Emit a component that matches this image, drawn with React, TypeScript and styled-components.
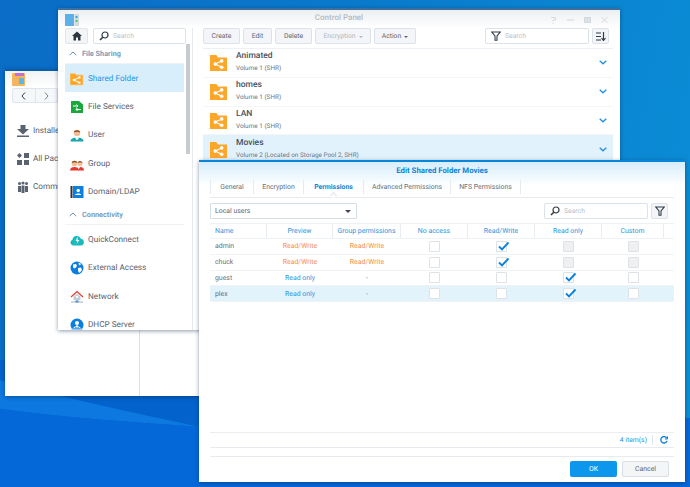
import React from "react";
import styled, { createGlobalStyle } from "styled-components";

const Global = createGlobalStyle`
  html, body { margin: 0; padding: 0; width: 690px; height: 487px; overflow: hidden; }
  body { font-family: Roboto, "Liberation Sans", sans-serif; font-size: 8px; color: #515c6b; text-rendering: geometricPrecision; }
  * { box-sizing: border-box; }
`;

const Desktop = styled.div`
  position: relative; width: 690px; height: 487px; overflow: hidden;
  background: linear-gradient(100deg, #0a6cc6 0%, #0a79cb 45%, #0b8ed6 100%);
`;
const Wave = styled.svg`position: absolute; left: 0; top: 0;`;

const Win = styled.div<{ $x: number; $y: number; $w: number; $h: number; $top?: string }>`
  position: absolute; left: ${p => p.$x}px; top: ${p => p.$y}px; width: ${p => p.$w}px; height: ${p => p.$h}px;
  background: #fff; display: flex; flex-direction: column; overflow: hidden;
  border-top: 2px solid ${p => p.$top ?? "#0a5da8"};
  box-shadow: 0 1px 4px rgba(0,30,70,.45);
`;

/* Package Center */
const PkgHead = styled.div`
  height: 17px; padding: 2px 7px; background: linear-gradient(#f0f2f4, #fff);
`;
const NavGroup = styled.div`
  display: flex; width: 46px; height: 15px; margin: 0 0 0 7px;
  border: 1px solid #dfe5ec; border-radius: 2px; background: #f5f7f9;
`;
const NavBtn = styled.div`
  flex: 1; display: flex; align-items: center; justify-content: center;
  & + & { border-left: 1px solid #dfe5ec; }
`;
const PkgList = styled.div`display: flex; flex-direction: column; margin-top: 14px; padding-left: 12px;`;
const PkgItem = styled.div`display: flex; align-items: center; gap: 4px; height: 28px; font-size: 8.2px; white-space: nowrap; color: #545f6d;`;
const PkgBody = styled.div`flex: 1; position: relative;`;
const PkgLine = styled.div`position: absolute; left: 134px; top: 0; bottom: 0; width: 1px; background: #dcdfe3;`;

/* Control Panel */
const CpHead = styled.div`
  height: 18px; flex: none; display: flex; align-items: center; position: relative; padding: 2px 7px 0;
  background: linear-gradient(#eceff1, #fff);
`;
const CpTitle = styled.div`
  position: absolute; left: 0; right: 0; top: 3px; text-align: center; color: #b3bac3; font-size: 8px; font-weight: 500;
`;
const WinCtl = styled.div`margin-left: auto; display: flex; gap: 10px; padding-right: 5px;`;
const CpBody = styled.div`flex: 1; display: flex; min-height: 0;`;
const Side = styled.div`
  width: 135px; flex: none; padding-left: 7px; border-right: 1px solid #e6eaee; margin-right: 10px; position: relative;
`;
const SideTop = styled.div`display: flex; gap: 5px; height: 16px;`;
const HomeBtn = styled.div`
  width: 23px; height: 16px; border: 1px solid #dfe5ec; border-radius: 2px; background: #f3f5f7;
  display: flex; align-items: center; justify-content: center;
`;
const SearchBox = styled.div<{ $w: number }>`
  width: ${p => p.$w}px; height: 16px; border: 1px solid #dbe2ea; border-radius: 2px; background: #fff; flex: none;
  display: flex; align-items: center; gap: 4px; padding-left: 5px; color: #b9c1ca; font-size: 6.8px;
`;
const Section = styled.div`
  height: 20px; width: 119px; display: flex; align-items: center; gap: 5px; padding-left: 4px;
  color: #7d9cb8; font-weight: 700; font-size: 7.3px; border-bottom: 1px solid #f0f3f6;
`;
const SideList = styled.div`display: flex; flex-direction: column; width: 119px;`;
const SideItem = styled.div<{ $on?: boolean }>`
  height: 28.3px; display: flex; align-items: center; gap: 4px; padding: 1px 0 0 5px; font-size: 8.2px;
  background: ${p => (p.$on ? "#d9eefb" : "transparent")}; color: ${p => (p.$on ? "#1f97e6" : "#59626f")};
`;
const Scroll = styled.div`
  position: absolute; left: 128px; top: 16px; width: 4px; height: 110px; background: #c6cbcf;
`;
const Main = styled.div`flex: 1; display: flex; flex-direction: column; min-width: 0; padding-right: 7px;`;
const Toolbar = styled.div`display: flex; height: 16px; gap: 3px; flex: none; margin-right: 4px;`;
const Btn = styled.div<{ $w: number; $off?: boolean }>`
  width: ${p => p.$w}px; height: 16px; flex: none; border: 1px solid #dbe2ea; border-radius: 2px; background: #f3f5f8;
  display: flex; align-items: center; justify-content: center; gap: 3px; font-size: 6.8px;
  color: ${p => (p.$off ? "#b0b7c0" : "#5c6673")};
`;
const Caret = styled.span`
  width: 0; height: 0; border-left: 2px solid transparent; border-right: 2px solid transparent; border-top: 2px solid currentColor; margin-top: 1px;
`;
const Grow = styled.div`flex: 1;`;
const FolderList = styled.div`margin-top: 4px; border-top: 1px solid #edf0f4; display: flex; flex-direction: column;`;
const FolderRow = styled.div<{ $on?: boolean }>`
  height: 28.8px; flex: none; display: flex; align-items: center; padding: 0 6px 0 7px; gap: 9px;
  border-bottom: 1px solid #f3f5f7; background: ${p => (p.$on ? "#e2f2fc" : "#fff")};
`;
const FolderText = styled.div`flex: 1; display: flex; flex-direction: column; gap: 3px; margin-top: -2px;`;
const FolderName = styled.div`font-size: 8.5px; font-weight: 500; color: #47505c;`;
const FolderSub = styled.div`font-size: 6.4px; color: #6c7581;`;

/* Dialog */
const DlgHead = styled.div`
  height: 24px; flex: none; background: linear-gradient(#d6edfb, #fff); text-align: center;
  font-size: 7.8px; font-weight: 700; color: #0a86d8; padding-top: 4px;
`;
const DlgBody = styled.div`flex: 1; display: flex; flex-direction: column; padding: 0 14px 0 11px; min-height: 0;`;
const Tabs = styled.div`display: flex; height: 18px; flex: none; margin-top: -6px; border-bottom: 1px solid #e7ebef; margin-right: -3px; position: relative;`;
const Tab = styled.div<{ $w: number; $on?: boolean }>`
  width: ${p => p.$w}px; height: 14px; flex: none; display: flex; align-items: center; justify-content: center; font-size: 6.9px;
  border-left: 1px solid #e7ebef; position: relative;
  color: ${p => (p.$on ? "#0a86d8" : "#666f7b")}; font-weight: ${p => (p.$on ? 700 : 400)};
  &:last-child { border-right: 1px solid #e7ebef; }
`;
const TabTip = styled.span`
  position: absolute; left: 50%; bottom: -4px; width: 5px; height: 5px; margin-left: -3px; background: #fff;
  border-left: 1px solid #e0e5ea; border-top: 1px solid #e0e5ea; transform: rotate(45deg);
`;
const Filters = styled.div`display: flex; align-items: center; margin-top: 5px; height: 16px; flex: none; gap: 3px; margin-right: 3px;`;
const Select = styled.div`
  width: 147px; height: 16px; border: 1px solid #d5dde5; display: flex; align-items: center; justify-content: space-between; padding: 0 5px 0 4px;
  font-size: 6.9px; color: #5f6874; border-radius: 1px;
`;
const SelectArrow = styled.span`
  width: 0; height: 0; border-left: 3px solid transparent; border-right: 3px solid transparent; border-top: 3px solid #3c4650;
`;
const IconBtn = styled.div`
  width: 17px; height: 16px; border: 1px solid #dbe2ea; border-radius: 2px; background: #f3f5f8; display: flex; align-items: center; justify-content: center; flex: none;
`;
const Table = styled.div`margin-top: 4px; display: flex; flex-direction: column; margin-right: -3px;`;
const Row = styled.div<{ $on?: boolean; $head?: boolean }>`
  display: grid; grid-template-columns: 57px 66px 68px 67px 67px 67px 62px 9px; align-items: center;
  height: ${p => (p.$head ? 16 : 15.8)}px; flex: none;
  background: ${p => (p.$on ? "#e3f3fc" : "#fff")};
  border-bottom: 1px solid #f0f3f5;
  border-top: ${p => (p.$head ? "1px solid #eef1f4" : "0")};
`;
const Cell = styled.div<{ $left?: boolean; $c?: string; $sep?: boolean }>`
  font-size: 6.9px; white-space: nowrap;
  padding-left: ${p => (p.$left ? "5px" : "0")}; color: ${p => p.$c ?? "#67707c"};
  display: flex; align-items: center; height: 100%; justify-content: ${p => (p.$left ? "flex-start" : "center")};
  border-right: ${p => (p.$sep ? "1px solid #e9edf1" : "0")};
`;
const Check = styled.div<{ $off?: boolean }>`
  width: 11px; height: 11px; border: 1px solid #dde2e7; border-radius: 1px; position: relative;
  background: ${p => (p.$off ? "#eef0f2" : "#fff")};
  & svg { position: absolute; left: 0; top: -2px; }
`;
const Spacer = styled.div`flex: 1;`;
const Status = styled.div`
  border-top: 1px solid #eceff2; border-bottom: 1px solid #e7eaee; height: 16px; flex: none; display: flex; align-items: center; justify-content: flex-end;
  font-size: 6.8px; color: #2b96dc; margin-right: -3px; padding-right: 6px; gap: 5px;
  & svg { margin-left: 2px; }
`;
const StatusSep = styled.div`width: 1px; height: 10px; background: #e2e6ea;`;
const Footer = styled.div`
  margin-top: 8px; margin-right: -3px; height: 26px; flex: none; border-top: 1px solid #e7eaee; display: flex; justify-content: flex-end; align-items: flex-start; gap: 5px; padding: 4px 5px 0 0;
`;
const Ok = styled.div`
  width: 47px; height: 16px; background: #0d97ec; color: #fff; border-radius: 2px; font-size: 6.9px; display: flex; align-items: center; justify-content: center;
`;
const Cancel = styled(Ok)`
  background: #f3f5f7; color: #5c6673; border: 1px solid #d9dfe5;
`;

/* ---- drawings ---- */
const Folder = () => (
  <svg width="17" height="17" viewBox="0 0 16 16" style={{ flex: "none" }}>
    <path d="M0 1h6l1.500 2.200H16V16H0z" fill="#fca62a" />
    <path d="M5 9.500l6-3M5 9.500l6 3" fill="none" stroke="#fff" strokeWidth="1" />
    <circle cx="5" cy="9.500" r="1.700" fill="#fff" /><circle cx="11" cy="6.500" r="1.700" fill="#fff" /><circle cx="11" cy="12.500" r="1.700" fill="#fff" />
  </svg>
);
const Glass = ({ c = "#333d48" }: { c?: string }) => (
  <svg width="10" height="10" viewBox="0 0 10 10" fill="none" stroke={c} strokeWidth="1.200"><circle cx="6" cy="4" r="3" /><path d="M3.800 6.200L1 9" strokeWidth="1.600" /></svg>
);
const Funnel = () => (
  <svg width="10" height="10" viewBox="0 0 10 10" fill="none" stroke="#333d48" strokeWidth="1.100"><path d="M.8 1h8.400L6 5v4.200H4V5z" /></svg>
);
const Chev = () => (
  <svg width="8" height="5" viewBox="0 0 8 5" fill="none" stroke="#1e90e0" strokeWidth="1.300" style={{ flex: "none" }}><path d="M.7.8L4 3.800 7.300.8" /></svg>
);
const Up = () => (
  <svg width="8" height="5" viewBox="0 0 8 5" fill="none" stroke="#6f8ea8" strokeWidth="1"><path d="M.7 4L4 1l3.300 3" /></svg>
);
const Tick = () => (
  <svg width="13" height="12" viewBox="0 0 13 12" fill="none" stroke="#0a84e0" strokeWidth="1.900"><path d="M2 6.500L5 9.500 11.500 2.500" /></svg>
);
const Ic: React.FC<{ children: React.ReactNode }> = ({ children }) => (
  <svg width="14" height="14" viewBox="0 0 14 14" style={{ flex: "none" }}>{children}</svg>
);
const SideIcons: Record<string, React.ReactNode> = {
  shared: <Ic><path d="M0 1.500h5l1.500 1.500H13V13H0z" fill="#fca62a" stroke="#fbd08a" strokeWidth=".7" /><path d="M4 8l5-2.500M4 8l5 2.500" stroke="#fff" fill="none" /><circle cx="4" cy="8" r="1.200" fill="#fff" /><circle cx="9.400" cy="5.400" r="1.200" fill="#fff" /><circle cx="9.400" cy="10.600" r="1.200" fill="#fff" /></Ic>,
  files: <Ic><path d="M1 1h8l4 3.500V13H1z" fill="#19a83c" /><path d="M3 6h5M6.500 4.500L8 6 6.500 7.500M11 9.500H6M7.500 8L6 9.500 7.500 11" stroke="#fff" fill="none" /></Ic>,
  user: <Ic><path d="M0.500 13.500c0-3 3-4 6.500-4s6.500 1 6.500 4z" fill="#19a6ad" /><path d="M5.500 9h3v2L7 12 5.500 11z" fill="#fff" /><circle cx="7" cy="5" r="3.200" fill="#f6bd93" /><path d="M3.800 4.500C4 1.500 10 1.500 10.200 4.500 8 3.500 6 3.500 3.800 4.500z" fill="#8a4a20" /></Ic>,
  group: <Ic><path d="M0 13.500c0-2.500 2-3.500 4.500-3.500S9 11 9 13.500z" fill="#e4392f" /><circle cx="4.500" cy="6.500" r="2.800" fill="#f6bd93" /><path d="M1.700 6C2 3 7 3 7.300 6 5.500 5 3.500 5 1.700 6z" fill="#8a4a20" /><path d="M8 13.500H14c0-2.500-1.500-3.500-4-3.500z" fill="#e4392f" /><circle cx="10" cy="6.500" r="2.500" fill="#f6bd93" /><path d="M7.500 6C8 3.500 12 3.500 12.500 6 11 5 9 5 7.500 6z" fill="#6b3a1a" /></Ic>,
  domain: <Ic><rect x="0.500" y="1" width="2" height="12" fill="#28323e" /><rect x="3" y="1" width="10.500" height="12" fill="#0d7fdc" /><circle cx="8.200" cy="5.500" r="1.700" fill="#fff" /><path d="M5.200 10c0-2 6-2 6 0z" fill="#fff" /></Ic>,
  quick: <Ic><path d="M3 12.500a3 3 0 0 1-.6-5.800 4.500 4.500 0 0 1 8.600-.9 3.400 3.400 0 0 1 0 6.700z" fill="#1ab9bd" /><path d="M7.800 3.500L5.500 8h2L6.500 11l3-4H7.500z" fill="#fff" /></Ic>,
  ext: <Ic><circle cx="7" cy="7" r="6.500" fill="#0b7fe0" /><path d="M3 3.500L6 3l1 2-2 2.500-2-1zM8 7l3-.5 1 2.500-2.500 3L8 10zM8.500 1.500l3 1.500L9 4.500z" fill="#fff" /></Ic>,
  net: <Ic><path d="M1 7l6-5.500L13 7" fill="none" stroke="#e8372c" strokeWidth="1.100" /><path d="M3.500 6.500L7 3.500l3.500 3V10h-7z" fill="#c4ccd4" /><circle cx="7" cy="6.800" r="1.200" fill="#fff" /><rect x="5.500" y="10.500" width="3" height="2" fill="#0b7fe0" /><path d="M1 12h12" stroke="#9fb0c0" /></Ic>,
  dhcp: <Ic><circle cx="7" cy="7" r="6.500" fill="#0b7fe0" /><circle cx="7" cy="5" r="2" fill="#fff" /><path d="M7 7v3M7 8L3.500 10M7 8l3.500 2" stroke="#fff" /><path d="M1 10.500h12v.5c-3 3-9 3-12 0z" fill="#9cc9f0" /></Ic>,
};
const Winicons = () => (
  <WinCtl>
    <svg width="7" height="8" viewBox="0 0 7 8" fill="none" stroke="#d3d8dd" strokeWidth="1"><path d="M1 1.500h4.500v2.500h-2.500v1.500M3 7v1" /></svg>
    <svg width="7" height="8" viewBox="0 0 7 8" stroke="#d3d8dd"><path d="M0 4h7" /></svg>
    <svg width="7" height="8" viewBox="0 0 7 8" fill="#dde1e5" stroke="#d3d8dd"><rect x=".5" y="1.500" width="6" height="5" /></svg>
    <svg width="7" height="8" viewBox="0 0 7 8" stroke="#d3d8dd"><path d="M.5 1l6 6M6.500 1l-6 6" /></svg>
  </WinCtl>
);

const sideA = [
  ["shared", "Shared Folder"], ["files", "File Services"], ["user", "User"], ["group", "Group"], ["domain", "Domain/LDAP"],
];
const sideB = [["quick", "QuickConnect"], ["ext", "External Access"], ["net", "Network"], ["dhcp", "DHCP Server"]];
const folders = [
  ["Animated", "Volume 1 (SHR)"], ["homes", "Volume 1 (SHR)"], ["LAN", "Volume 1 (SHR)"],
  ["Movies", "Volume 2 (Located on Storage Pool 2, SHR)"],
];
const O = "#f58f45", B = "#2b96dc";
const rows = [
  { n: "admin", p: "Read/Write", g: "Read/Write", pc: O, gc: O, c: ["", "t", "d", "d"] },
  { n: "chuck", p: "Read/Write", g: "Read/Write", pc: O, gc: O, c: ["", "t", "d", "d"] },
  { n: "guest", p: "Read only", g: "-", pc: B, gc: undefined, c: ["", "", "t", ""] },
  { n: "plex", p: "Read only", g: "-", pc: B, gc: undefined, c: ["", "", "t", ""], on: true },
];
const heads = ["Preview", "Group permissions", "No access", "Read/Write", "Read only", "Custom"];

export default function App() {
  return (
    <Desktop>
      <Global />
      <Wave width="690" height="487" viewBox="0 0 690 487">
        <path d="M0 360C200 390 450 420 690 418V487H0z" fill="#0462cc" />
        <path d="M0 380C60 397 130 412 200 427C130 422 60 417 0 409z" fill="#0c78e0" />
        <path d="M0 409C60 417 130 422 200 427C350 440 500 440 690 418V487H0z" fill="#0568d8" />
      </Wave>

      <Win $x={5} $y={69} $w={260} $h={327}>
        <PkgHead>
          <svg width="13" height="13" viewBox="0 0 13 13"><rect width="13" height="13" rx="1" fill="#f5b45e" /><rect x="3" y="0" width="9" height="3" fill="#c66fd0" /><path d="M7 5h5v6H7z" fill="#58b8e8" /></svg>
        </PkgHead>
        <NavGroup>
          <NavBtn><svg width="5" height="8" viewBox="0 0 5 8" fill="none" stroke="#333d48" strokeWidth="1"><path d="M4 .5L1 4l3 3.500" /></svg></NavBtn>
          <NavBtn><svg width="5" height="8" viewBox="0 0 5 8" fill="none" stroke="#77818d" strokeWidth="1"><path d="M1 .5L4 4 1 7.500" /></svg></NavBtn>
        </NavGroup>
        <PkgList>
          <PkgItem><svg width="12" height="12" viewBox="0 0 12 12" fill="#5a6470"><path d="M3.500 0h5v4H12L6 9.500 0 4h3.500zM0 10.500h12V12H0z" /></svg>Installed</PkgItem>
          <PkgItem><svg width="12" height="12" viewBox="0 0 12 12" fill="#5a6470"><path d="M2.500 0l2.500 2.500L2.500 5 0 2.500z" /><rect x="7" y="0" width="5" height="5" /><rect y="7" width="5" height="5" /><rect x="7" y="7" width="5" height="5" /></svg>All Packages</PkgItem>
          <PkgItem><svg width="12" height="12" viewBox="0 0 12 12" fill="#5a6470"><circle cx="2.500" cy="2.500" r="1.500" /><circle cx="6" cy="2" r="1.600" /><circle cx="9.500" cy="2.500" r="1.500" /><path d="M1 5h3v6H1zM4.500 4.500h3V12h-3zM8 5h3v6H8z" /></svg>Community</PkgItem>
        </PkgList>
        <PkgBody><PkgLine /></PkgBody>
      </Win>

      <Win $x={58} $y={8} $w={562} $h={322} $top="#3a6f9f">
        <CpHead>
          <svg width="14" height="12" viewBox="0 0 14 12"><rect width="9" height="12" fill="#5cb1e8" /><rect x="9.500" width="4.500" height="12" fill="#d4d9de" /><rect x="10.500" y="2" width="2" height="2" fill="#39a3df" /><rect x="10.500" y="6" width="2" height="2" fill="#5ec06e" /></svg>
          <CpTitle>Control Panel</CpTitle>
          <Winicons />
        </CpHead>
        <CpBody>
          <Side>
            <SideTop>
              <HomeBtn><svg width="10" height="10" viewBox="0 0 10 10" fill="#2c3640"><path d="M5 .5L0 5h1.500v4.500H4V6.500h2v3h2.500V5H10z" /></svg></HomeBtn>
              <SearchBox $w={93}><Glass />Search</SearchBox>
            </SideTop>
            <Section><Up />File Sharing</Section>
            <SideList>
              {sideA.map(([k, t], i) => (
                <SideItem key={t} $on={i === 0}>{SideIcons[k]}{t}</SideItem>
              ))}
            </SideList>
            <Section><Up />Connectivity</Section>
            <SideList>
              {sideB.map(([k, t]) => (
                <SideItem key={t}>{SideIcons[k]}{t}</SideItem>
              ))}
            </SideList>
            <Scroll />
          </Side>
          <Main>
            <Toolbar>
              <Btn $w={37}>Create</Btn><Btn $w={29}>Edit</Btn><Btn $w={37}>Delete</Btn>
              <Btn $w={56} $off>Encryption<Caret /></Btn>
              <Btn $w={42}>Action<Caret /></Btn>
              <Grow />
              <SearchBox $w={104}><Funnel />Search</SearchBox>
              <IconBtn>
                <svg width="10" height="9" viewBox="0 0 10 9" fill="none" stroke="#333d48" strokeWidth="1.200"><path d="M0 1h5M0 4.500h5M0 8h5M7.500 0v8M5.500 6l2 2.500 2-2.500" /></svg>
              </IconBtn>
            </Toolbar>
            <FolderList>
              {folders.map(([n, s], i) => (
                <FolderRow key={n} $on={i === 3}>
                  <Folder />
                  <FolderText><FolderName>{n}</FolderName><FolderSub>{s}</FolderSub></FolderText>
                  <Chev />
                </FolderRow>
              ))}
            </FolderList>
          </Main>
        </CpBody>
      </Win>

      <Win $x={199} $y={160} $w={486} $h={322} $top="#0a86d8">
        <DlgHead>Edit Shared Folder Movies</DlgHead>
        <DlgBody>
          <Tabs>
            <Tab $w={43}>General</Tab>
            <Tab $w={50}>Encryption</Tab>
            <Tab $w={60} $on>Permissions<TabTip /></Tab>
            <Tab $w={87}>Advanced Permissions</Tab>
            <Tab $w={71}>NFS Permissions</Tab>
          </Tabs>
          <Filters>
            <Select>Local users<SelectArrow /></Select>
            <Grow />
            <SearchBox $w={104}><Glass />Search</SearchBox>
            <IconBtn><Funnel /></IconBtn>
          </Filters>
          <Table>
            <Row $head>
              <Cell $left $sep $c={B}>Name</Cell>
              {heads.map(h => <Cell key={h} $sep $c={B}>{h}</Cell>)}
              <Cell />
            </Row>
            {rows.map(r => (
              <Row key={r.n} $on={r.on}>
                <Cell $left>{r.n}</Cell>
                <Cell $c={r.pc}>{r.p}</Cell>
                <Cell $c={r.gc}>{r.g}</Cell>
                {r.c.map((v, i) => (
                  <Cell key={i}><Check $off={v === "d"}>{v === "t" && <Tick />}</Check></Cell>
                ))}
                <Cell />
              </Row>
            ))}
          </Table>
          <Spacer />
          <Status>
            4 item(s)<StatusSep />
            <svg width="8" height="8" viewBox="0 0 8 8" fill="none" stroke="#0a7fd6" strokeWidth="1.300"><path d="M6.800 2.200A3.200 3.200 0 1 0 7 5" /><path d="M7.500 .5v2.500H5" strokeWidth="1" /></svg>
          </Status>
          <Footer><Ok>OK</Ok><Cancel>Cancel</Cancel></Footer>
        </DlgBody>
      </Win>
    </Desktop>
  );
}
